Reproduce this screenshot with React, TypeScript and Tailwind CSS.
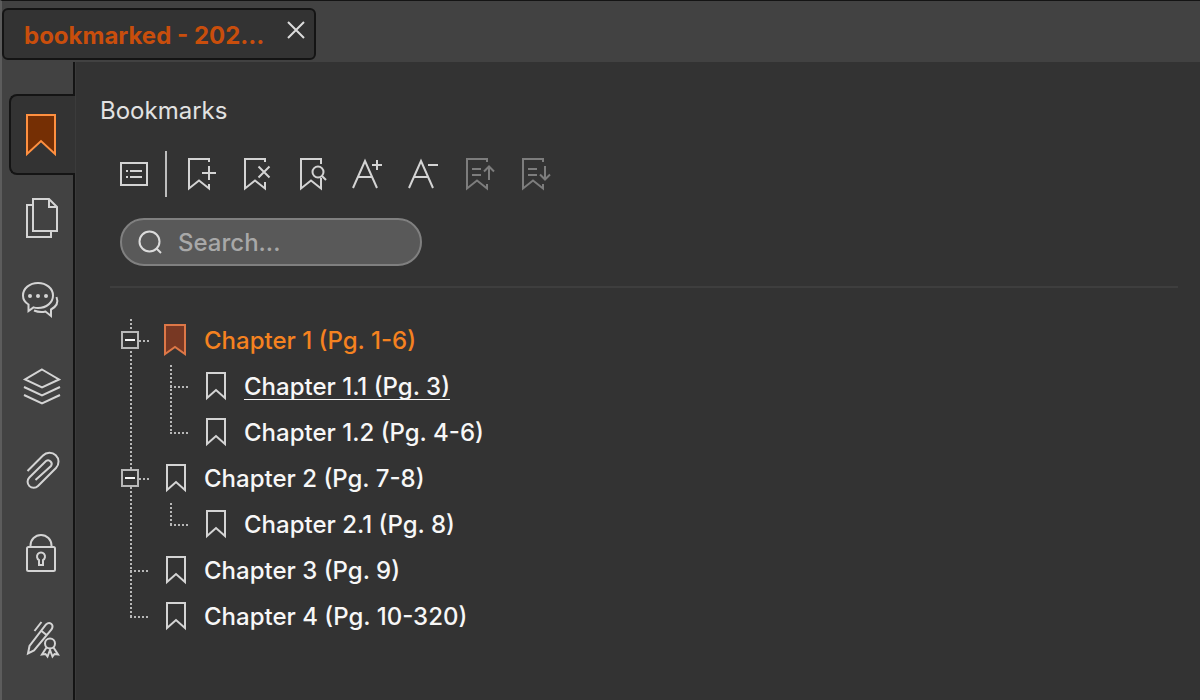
import React, { useState } from 'react';
import clsx from 'clsx';

interface BookmarkNode {
  title: string;
  selected?: boolean;
  underlined?: boolean;
  children?: BookmarkNode[];
}

const bookmarks: BookmarkNode[] = [
  {
    title: 'Chapter 1 (Pg. 1-6)',
    selected: true,
    children: [
      { title: 'Chapter 1.1 (Pg. 3)', underlined: true },
      { title: 'Chapter 1.2 (Pg. 4-6)' },
    ],
  },
  { title: 'Chapter 2 (Pg. 7-8)', children: [{ title: 'Chapter 2.1 (Pg. 8)' }] },
  { title: 'Chapter 3 (Pg. 9)' },
  { title: 'Chapter 4 (Pg. 10-320)' },
];

// Toolbar drawings, all on a 32x32 canvas
const tools = [
  { label: 'New bookmark', path: 'M24 4V1H4v29.5l10-8 10 8V26M17 15h14M24 8v14' },
  { label: 'Delete bookmark', path: 'M24 4V1H4v29.5l10-8 10 8V24M17.5 8.5l11 11M28.5 8.5l-11 11' },
  { label: 'Find bookmark', path: 'M24 6V1H4v29.5l10-8 10 8V20M15.5 14a5.5 5.5 0 1 0 11 0a5.5 5.5 0 1 0-11 0M25 18l4 4' },
  { label: 'Increase text size', path: 'M0 30L12 3l12 27M4.5 19h15M19 7h10M24 2v10' },
  { label: 'Decrease text size', path: 'M0 30L12 3l12 27M4.5 19h15M19 7h10' },
  { label: 'Move up', disabled: true, path: 'M22 4V1H2v29.5l10-8 10 8V26M7 11h9M7 17h9M24 22V9M19 13.5l5-5 5 5' },
  { label: 'Move down', disabled: true, path: 'M22 4V1H2v29.5l10-8 10 8V26M7 11h9M7 17h9M24 8v13M19 16.5l5 5 5-5' },
];

// Side panel drawings, all on a 40x48 canvas
const panels = [
  { label: 'Pages', icon: <path d="M28 6H12v32h24V14zM28 6v8h8M12 12H6v32h24v-6" /> },
  {
    label: 'Comments',
    icon: (
      <>
        <path d="M7.5 27.5C4 25.500 2 22 2 18.500 2 11.500 8.500 6 17 6s15 5.500 15 12.500S25.500 31 17 31c-1.500 0-3-.2-4.500-.6L7.500 34z" />
        <path d="M35.500 20c2 5 0 9.500-5.500 12.500V39l-5.500-4.500c-4 1-8 .5-11.500-1" />
        <g fill="currentColor" stroke="none">
          <circle cx="9" cy="19" r="2" />
          <circle cx="17" cy="19" r="2" />
          <circle cx="25" cy="19" r="2" />
        </g>
      </>
    ),
  },
  { label: 'Layers', icon: <path d="M21 8.500l17 10-17 8-17-8zM3 26l18 8.500L39 26M3 34l18 8.500L39 34" /> },
  {
    label: 'Attachments',
    icon: <path d="M6.5 26L22 10.500a9 9 0 0 1 13 12.500L17 41A6 6 0 0 1 8.300 32.500L25 16a3.600 3.600 0 0 1 5 5L14.500 35" />,
  },
  {
    label: 'Security',
    icon: (
      <>
        <rect x="6" y="18" width="28" height="24" rx="1.5" />
        <path d="M9.500 18v-1.500a10.500 10.500 0 0 1 21 0V18" />
        <path d="M18 31a4 4 0 1 1 4 0v5h-4z" />
      </>
    ),
  },
  {
    label: 'Signatures',
    icon: (
      <>
        <path d="M7 40.500l1.500-7.500L25 11.500c3.500-3.500 8.500 0 5.500 5L13 37.500zM20 17.500l5.500 4.500M20.500 9l-7 9" />
        <circle cx="29" cy="30.500" r="5" />
        <path d="M25.500 34.500L21 41.500l3.500-.5 2 2.500 2.500-6.500 2.500 6.500 2-2.500 3.500.5-4.500-7" />
      </>
    ),
  },
];

const App: React.FC = () => {
  return (
    <div className="flex min-h-screen flex-col bg-[#333333] font-['Inter',sans-serif] text-2xl text-[#e2e2e2]">
      <header className="flex h-[62px] shrink-0 items-start border-l-2 border-t border-l-[#5c5c5c] border-t-[#141414] bg-[#424242] pt-[7px]">
        <div className="flex h-[52px] w-[314px] items-center rounded-md border-2 border-[#141414] bg-[#333333] pl-5 pr-2">
          <span className="flex-1 truncate pt-1 font-bold text-[#c94e0c]">bookmarked - 202...</span>
          <button aria-label="Close tab" className="self-start pt-2.5">
            <svg className="h-5 w-5" viewBox="0 0 20 20" fill="none" stroke="#dcdcdc" strokeWidth="2">
              <path d="M2 2l16 16M18 2L2 18" />
            </svg>
          </button>
        </div>
      </header>

      <div className="flex flex-1">
        <SideNav />
        <main className="min-w-0 flex-1 border-l border-[#3b3b3b] pl-6 pr-[22px] pt-[33px]">
          <h1 className="leading-8">Bookmarks</h1>
          <Toolbar />
          <label className="ml-5 mt-[21px] flex h-12 w-[302px] items-center rounded-full border-2 border-[#808080] bg-[#595959]">
            <svg className="ml-4 h-6 w-6 shrink-0" viewBox="0 0 24 24" fill="none" stroke="#dcdcdc" strokeWidth="2">
              <circle cx="11.500" cy="11.500" r="10" />
              <path d="M18.500 18.500l4.500 4.500" />
            </svg>
            <input
              type="text"
              aria-label="Search bookmarks"
              placeholder="Search..."
              className="ml-4 min-w-0 flex-1 bg-transparent pr-4 pt-0.5 font-medium outline-none placeholder:text-[#a8a8a8]"
            />
          </label>
          <hr className="ml-2.5 mt-5 border-t-2 border-[#3e3e3e]" />
          <div className="ml-5 mt-[29px]">
            <BookmarkList items={bookmarks} />
          </div>
        </main>
      </div>
    </div>
  );
};

const SideNav = () => (
  <nav className="flex w-[75px] shrink-0 flex-col border-l-2 border-[#5c5c5c] bg-[#424242]">
    <div className="h-8 border-r-2 border-[#141414]" />
    <button
      aria-label="Bookmarks"
      className="ml-[7px] flex h-[81px] items-center justify-center rounded-l-lg border-2 border-r-0 border-[#141414] bg-[#333333] pr-1"
    >
      <svg className="h-12 w-10" viewBox="0 0 40 48" fill="#752f04" stroke="#ff9040" strokeWidth="2">
        <path d="M6 4h28v39l-14-13-14 13z" />
      </svg>
    </button>
    <div className="flex flex-1 flex-col border-r-2 border-[#141414] pl-[7px]">
      {panels.map(panel => (
        <button key={panel.label} aria-label={panel.label} className="flex h-[84px] items-center justify-center text-[#d4d4d4]">
          <svg className="h-12 w-10" viewBox="0 0 40 48" fill="none" stroke="currentColor" strokeWidth="2">
            {panel.icon}
          </svg>
        </button>
      ))}
    </div>
  </nav>
);

const Toolbar = () => (
  <div className="ml-1.5 mt-6 flex h-[46px] items-center">
    <button aria-label="Options" className="flex w-14 justify-center">
      <svg className="h-8 w-8" viewBox="0 0 32 32" fill="none" stroke="#d4d4d4" strokeWidth="2">
        <path d="M3 5h26v22H3zM8 13h2M12 13h12M8 19h2M12 19h12" />
      </svg>
    </button>
    <div className="ml-[3px] mr-1.5 h-full w-0.5 bg-[#bdbdbd]" />
    {tools.map(tool => (
      <button
        key={tool.label}
        aria-label={tool.label}
        disabled={tool.disabled}
        className={clsx('flex w-14 justify-center', tool.disabled ? 'text-[#7d7d7d]' : 'text-[#d4d4d4]')}
      >
        <svg className="h-8 w-8 overflow-visible" viewBox="0 0 32 32" fill="none" stroke="currentColor" strokeWidth="2">
          <path d={tool.path} />
        </svg>
      </button>
    ))}
  </div>
);

const BookmarkList = ({ items }: { items: BookmarkNode[] }) => (
  <ul className="relative">
    {/* Dotted trunk behind the rows */}
    <li
      aria-hidden="true"
      className="absolute bottom-[21px] left-2.5 top-0.5 w-0.5 bg-[repeating-linear-gradient(to_bottom,#b8b8b8_0_2px,transparent_2px_4px)]"
    />
    {items.map(item => (
      <BookmarkRow key={item.title} item={item} />
    ))}
  </ul>
);

const BookmarkRow = ({ item }: { item: BookmarkNode }) => {
  const [open, setOpen] = useState(true);
  const hasChildren = !!item.children?.length;

  return (
    <li className="relative">
      <div className="flex h-[46px] items-center">
        <div className="flex w-11 items-center">
          {hasChildren ? (
            <button
              aria-label={open ? 'Collapse' : 'Expand'}
              onClick={() => setOpen(!open)}
              className="ml-px flex h-[18px] w-[18px] items-center justify-center border-2 border-[#b8b8b8] bg-[#333333]"
            >
              <svg className="h-3.5 w-3.5" viewBox="0 0 14 14" stroke="#f5f5f5" strokeWidth="2">
                <path d={open ? 'M2 7h10' : 'M2 7h10M7 2v10'} />
              </svg>
            </button>
          ) : null}
          <span
            className={clsx(
              'mt-0.5 h-0.5 bg-[repeating-linear-gradient(to_right,#b8b8b8_0_2px,transparent_2px_4px)]',
              hasChildren ? 'w-2.5' : 'ml-2.5 w-[18px]'
            )}
          />
        </div>
        {item.selected ? (
          <svg className="h-8 w-6 shrink-0" viewBox="0 0 24 32" fill="#783823" stroke="#dd7747" strokeWidth="2">
            <path d="M1 1h20v29l-10-7-10 7z" />
          </svg>
        ) : (
          <svg className="h-8 w-6 shrink-0" viewBox="0 0 24 32" fill="none" stroke="#d4d4d4" strokeWidth="2">
            <path d="M3 3h18v25l-9-8-9 8z" />
          </svg>
        )}
        <a
          href="#"
          className={clsx(
            'ml-4 whitespace-nowrap pt-0.5 font-medium',
            item.selected ? 'text-[#f58220]' : 'text-[#f7f7f7]',
            item.underlined && 'underline decoration-1 underline-offset-4 [text-decoration-skip-ink:none]'
          )}
        >
          {item.title}
        </a>
      </div>
      {hasChildren && open && (
        <div className="ml-10">
          <BookmarkList items={item.children!} />
        </div>
      )}
    </li>
  );
};

export default App;
